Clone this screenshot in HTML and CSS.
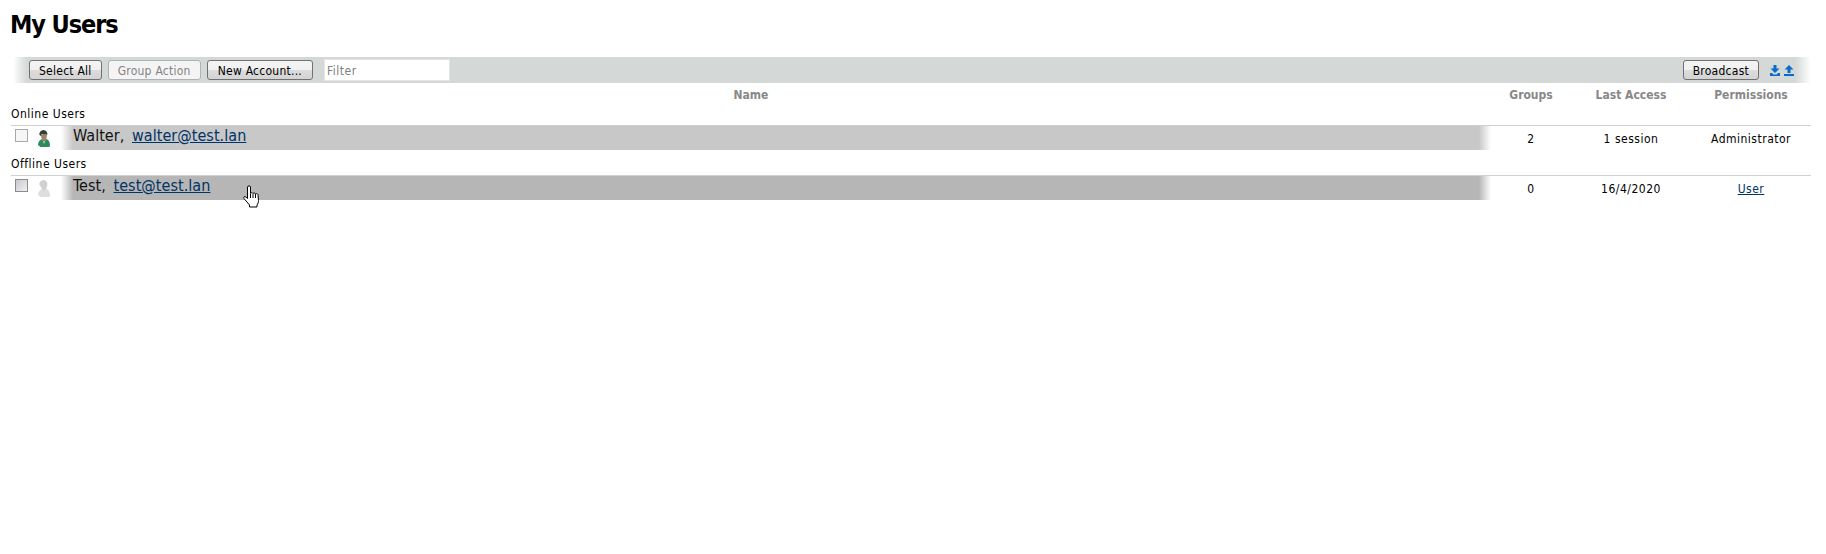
FILE: index.html
```html
<!DOCTYPE html>
<html lang="en">
  <head>
    <meta charset="UTF-8" />
    <title>My Users</title>
    <link rel="stylesheet" href="styles.css">
  </head>
  <body>
    <h1>My Users</h1>
    <div class="toolbar">
      <button class="btn">Select All</button>
      <button class="btn btn-disabled" disabled>Group Action</button>
      <button class="btn btn-wide">New Account...</button>
      <input class="filter" type="text" placeholder="Filter" />
      <span class="spacer"></span>
      <button class="btn">Broadcast</button>
      <span class="tool-icons">
        <svg width="10" height="11" viewBox="0 0 10 11"><path fill="#0a6cc8" d="M3.500 0h3v3.500H9.500L5 8 .5 3.500h3zM0 8h2l1.500 1.500h3L8 8h2v3H0z"/></svg>
        <svg width="10" height="11" viewBox="0 0 10 11"><path fill="#0a6cc8" d="M5 0l4.500 4.500h-3V8h-3V4.500h-3zM0 9h10v2H0z"/></svg>
      </span>
    </div>
    <div class="row head">
      <div class="col-name">Name</div>
      <div class="col">Groups</div>
      <div class="col">Last Access</div>
      <div class="col">Permissions</div>
    </div>
    <div class="group-title">Online Users</div>
    <div class="row user">
      <input class="check" type="checkbox" />
      <svg class="avatar" width="14" height="17" viewBox="0 0 14 17">
        <path fill="#2f8a5c" d="M1 15c0-3 1.500-5 4-6l2 1 2.500-1c2 .8 3.500 3 3.500 6l-.5 2h-9z"/>
        <path fill="#a8835f" d="M3.500 4.500h6.500L9.500 8c-.5 1.500-1.300 2.300-2.500 2.300S5 9.500 4.500 8z"/>
        <path fill="#33403a" d="M2.500 5C2 2 4 .3 6.500 0 9 .3 10.800 2 10.300 5L9.500 4.500C8 4.800 5.500 4.500 4.500 4L4 6z"/>
        <path fill="#fff" d="M5.500 10l1.500 1.500L8.500 10 7 14z" opacity=".7"/>
      </svg>
      <div class="name-cell online">Walter, <a href="#">walter@test.lan</a></div>
      <div class="col">2</div>
      <div class="col">1 session</div>
      <div class="col">Administrator</div>
    </div>
    <div class="group-title">Offline Users</div>
    <div class="row user">
      <input class="check check-dim" type="checkbox" />
      <svg class="avatar" width="14" height="17" viewBox="0 0 14 17">
        <path fill="#dedede" d="M1 15c0-3 1.500-5 4-6l2 1 2.500-1c2 .8 3.500 3 3.500 6l-.5 2h-9z"/>
        <path fill="#d0d0d0" d="M2.500 5C2 2 4 .3 6.500 0 9 .3 10.800 2 10.300 5L9.500 8c-.5 1.500-1.300 2.300-2.500 2.300S5 9.500 4.500 8z"/>
      </svg>
      <div class="name-cell offline">Test, <a href="#">test@test.lan</a></div>
      <div class="col">0</div>
      <div class="col">16/4/2020</div>
      <div class="col"><a href="#">User</a></div>
    </div>
    <svg class="cursor" width="17" height="23" viewBox="0 0 17 23">
      <path fill="#fff" stroke="#000" stroke-linejoin="round" d="M4.500 2c0-1.500 3-1.500 3 0V8.500c.5-1 2-1 2.500 0 .5-.7 2-.7 2.500.3.7-.5 2-.2 2.500.7l.500 6c0 2-.5 3-1.500 4.500v2H6.500V20L1 13.500c-.8-1.500.7-2.500 2-1.500l1.500 1.500z"/>
      <path fill="none" stroke="#000" d="M7.500 9v4M10 9v4M12.500 9v4"/>
    </svg>
  </body>
</html>
```

FILE: styles.css
```css
body {
  font-family: "DejaVu Sans", Tahoma, sans-serif;
  font-stretch: condensed;
  font-size: 12px;
  letter-spacing: 0.5px;
  color: #000;
  background-color: #fff;
  margin: 0;
  padding: 0 15px 0 11px;
  height: 554px;
  overflow: hidden;
}
h1 {
  font-size: 25px;
  font-weight: bold;
  line-height: 30px;
  letter-spacing: -1.100px;
  margin: 10px 0 17px -1px;
}
.toolbar {
  display: flex;
  align-items: center;
  height: 26px;
  margin-left: 2px;
  padding: 0 17px 0 16px;
  background: linear-gradient(to right, #fff, #d4d8d7 14px, #d4d8d7 calc(100% - 16px), #fff);
}
.btn {
  font-family: inherit;
  font-stretch: condensed;
  font-size: 12px;
  letter-spacing: 0.25px;
  height: 20px;
  padding: 1px 9px 0 9px;
  margin-right: 6px;
  color: #000;
  border: 1px solid #707070;
  border-radius: 3px;
  background: linear-gradient(#f4f4f4, #f0f0f0 50%, #dcdcdc 50%, #d4d4d4);
}
.btn-disabled {
  color: #838383;
  border-color: #adb2b5;
  background: #f4f4f4;
}
.btn-wide {
  padding: 1px 10px 0 10px;
}
.filter {
  font-family: inherit;
  font-stretch: condensed;
  font-size: 12px;
  letter-spacing: 0.5px;
  box-sizing: border-box;
  width: 126px;
  height: 22px;
  margin-left: 5px;
  padding: 1px 2px 0 2px;
  border: 1px solid #e4e4e4;
  background: #fff;
}
.filter::placeholder {
  color: #808080;
}
.spacer {
  flex: 1;
}
.tool-icons {
  display: flex;
  gap: 4px;
  margin-left: 5px;
}
.row {
  display: flex;
  align-items: center;
}
.col {
  text-align: center;
  width: 120px;
  padding-top: 1px;
}
.col:nth-last-child(3) {
  width: 80px;
}
.head {
  height: 22px;
  font-weight: bold;
  letter-spacing: 0;
  color: #888;
}
.col-name {
  flex: 1;
  text-align: center;
  padding-top: 1px;
}
.group-title {
  height: 20px;
  line-height: 19px;
}
.user {
  height: 25px;
  border-top: 1px solid #d0d0d0;
  box-sizing: border-box;
  margin-bottom: 5px;
}
.check {
  appearance: none;
  box-sizing: border-box;
  width: 13px;
  height: 13px;
  margin: 0 0 5px 4px;
  border: 1px solid #a8a8a8;
  background: #f6f6f6;
}
.check-dim {
  border-color: #8c8c8c;
  background: linear-gradient(135deg, #c8c8d0, #f0f0f0);
}
.avatar {
  margin: 1px 10px 0 9px;
  flex: none;
}
.name-cell {
  flex: 1;
  height: 24px;
  line-height: 20px;
  padding-left: 12px;
  font-size: 16px;
  letter-spacing: 0.050px;
  word-spacing: 3px;
  color: #111;
}
.online {
  background: linear-gradient(to right, #fff, #c8c8c8 12px, #c8c8c8 calc(100% - 12px), #fff);
}
.offline {
  background: linear-gradient(to right, #fff, #b6b6b6 12px, #b6b6b6 calc(100% - 12px), #fff);
}
a {
  color: #003366;
}
.cursor {
  position: absolute;
  left: 243px;
  top: 185px;
}
```
